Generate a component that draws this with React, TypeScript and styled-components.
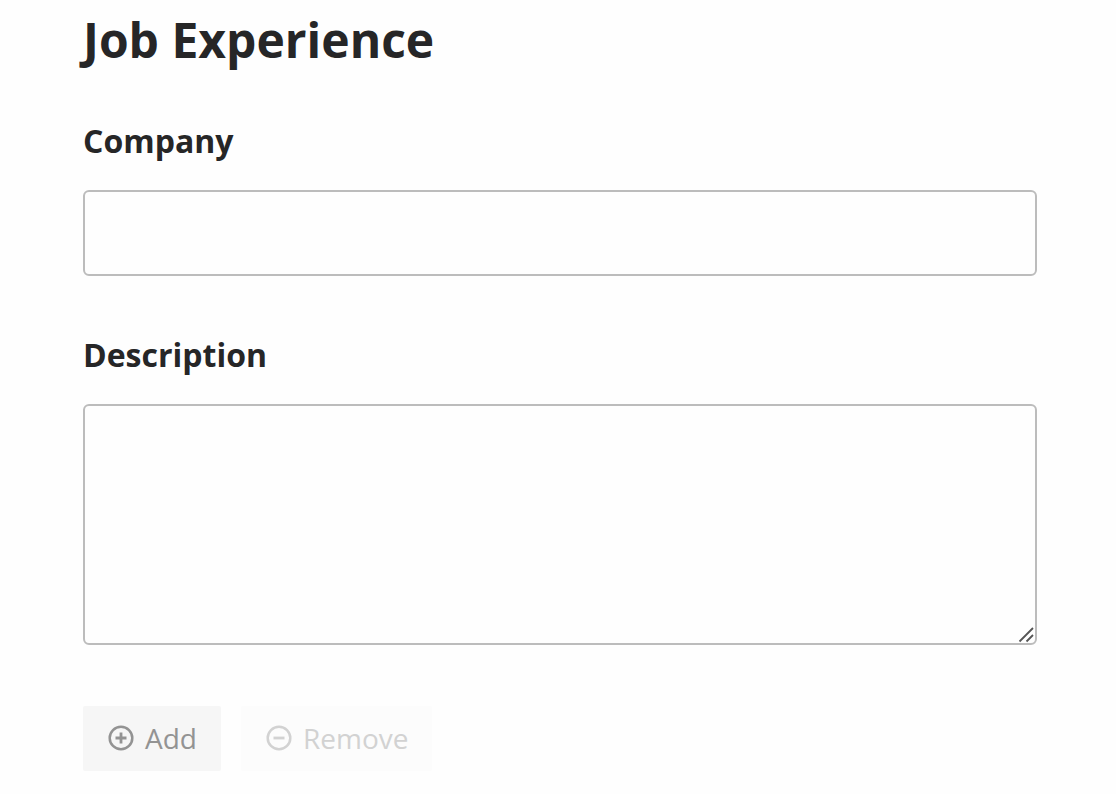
import React from "react";
import styled, { createGlobalStyle } from "styled-components";

const GlobalStyle = createGlobalStyle`
  *, *::before, *::after { box-sizing: border-box; }
  body {
    margin: 0;
    background: #fefefe;
    color: #262627;
    font-family: "Open Sans", "Noto Sans", sans-serif;
  }
`;

const Form = styled.form`
  padding: 8px 79px 20px 83px;
`;

const Title = styled.h1`
  margin: 0 0 48px;
  font-size: 48px;
  line-height: 64px;
  font-weight: 700;
`;

const Field = styled.div`
  display: flex;
  flex-direction: column;
  gap: 28px;
  margin-bottom: 58px;
`;

const Label = styled.label`
  font-size: 32px;
  line-height: 42px;
  font-weight: 700;
`;

const controlStyles = `
  display: block;
  width: 100%;
  margin: 0;
  padding: 16px 20px;
  border: 2px solid #bcbcbc;
  border-radius: 6px;
  background: #fefefe;
  color: inherit;
  font: inherit;
  font-size: 28px;
  outline: none;
`;

const TextInput = styled.input`
  ${controlStyles}
  height: 86px;
`;

const TextAreaFrame = styled.div`
  position: relative;
`;

const TextArea = styled.textarea`
  ${controlStyles}
  height: 241px;
  resize: none;
`;

const ResizeGrip = styled.svg`
  position: absolute;
  right: 2px;
  bottom: 2px;
  pointer-events: none;
`;

const Actions = styled.div`
  display: flex;
  align-items: flex-start;
  gap: 20px;
  padding-top: 3px;
`;

const ActionButton = styled.button<{ $muted?: boolean }>`
  display: flex;
  align-items: center;
  gap: 11px;
  height: 65px;
  padding: 0 24px 2px 25px;
  border: 0;
  border-radius: 2px;
  background: ${(p) => (p.$muted ? "#fcfcfc" : "#f6f6f6")};
  color: ${(p) => (p.$muted ? "#d2d2d2" : "#939393")};
  font: inherit;
  font-size: 28px;
  line-height: 40px;
`;

function CircleIcon({ plus }: { plus?: boolean }) {
  return (
    <svg width="26" height="26" viewBox="0 0 26 26" fill="none" stroke="currentColor" aria-hidden="true">
      <circle cx="13" cy="13" r="11.3" strokeWidth="2.5" />
      <path d={plus ? "M7.5 13h11M13 7.5v11" : "M7.5 13h11"} strokeWidth="2.8" />
    </svg>
  );
}

export default function App() {
  return (
    <>
      <GlobalStyle />
      <Form onSubmit={(e) => e.preventDefault()}>
        <Title>Job Experience</Title>
        <Field>
          <Label htmlFor="company">Company</Label>
          <TextInput id="company" type="text" />
        </Field>
        <Field>
          <Label htmlFor="description">Description</Label>
          <TextAreaFrame>
            <TextArea id="description" />
            <ResizeGrip width="18" height="18" viewBox="0 0 18 18" fill="none" stroke="#555" strokeWidth="1.8" aria-hidden="true">
              <path d="M2.5 16.5L16 3M9.5 16.5L16 10" />
            </ResizeGrip>
          </TextAreaFrame>
        </Field>
        <Actions>
          <ActionButton type="button">
            <CircleIcon plus />
            Add
          </ActionButton>
          <ActionButton type="button" $muted disabled>
            <CircleIcon />
            Remove
          </ActionButton>
        </Actions>
      </Form>
    </>
  );
}
